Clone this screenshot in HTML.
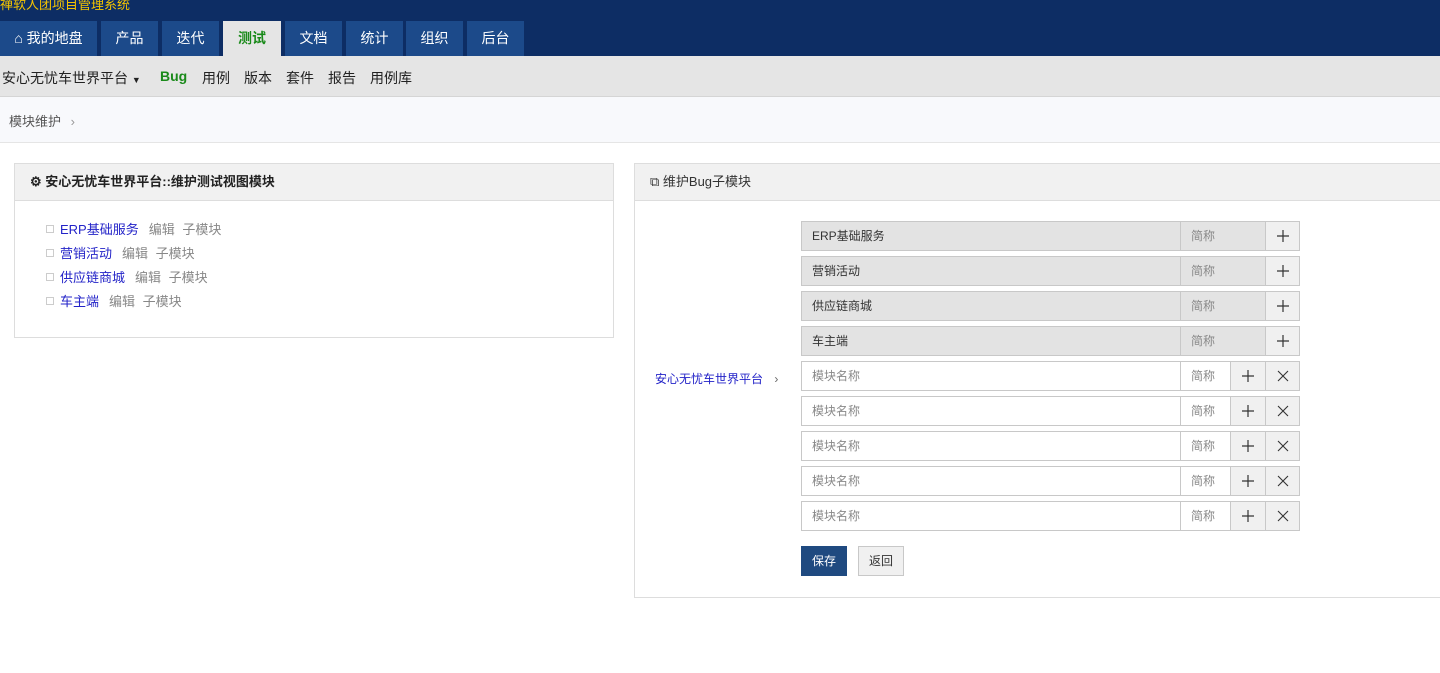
<!DOCTYPE html>
<html><head><meta charset="utf-8"><style>
*{box-sizing:border-box;margin:0;padding:0}
body{width:1440px;height:673px;overflow:hidden;background:#fff;font-family:"Liberation Sans","Noto Sans CJK SC",sans-serif;font-size:13px;color:#333;position:relative}
.abs{position:absolute}
.top{left:0;top:0;width:1440px;height:56px;background:#0d2d64}
.title{left:0;top:-6px;color:#f5c400;font-size:13px;white-space:nowrap}
.tab{top:21px;height:35px;background:#1c4a8a;color:#fff;font-size:14px;line-height:35px;text-align:center}
.tab.on{background:#e5e5e5;color:#1a8a1a;font-weight:bold}
.sub{left:0;top:56px;width:1440px;height:41px;background:#e5e5e5;border-bottom:1px solid #d5d5d5}
.sub span{position:absolute;top:12px;font-size:14px;color:#222}
.bc{left:0;top:97px;width:1440px;height:46px;background:#f8f9fc;border-bottom:1px solid #e5e5e5}
.panel{border:1px solid #ddd;background:#fff}
.ph{position:absolute;left:0;top:0;right:0;height:37px;background:#f1f1f1;border-bottom:1px solid #ddd;line-height:36px;padding-left:15px}
.li{position:absolute;left:31px;font-size:13px}
.li i{display:inline-block;width:8px;height:8px;border:1px solid #ccc;margin-right:6px;vertical-align:1px}
.li a{color:#2323c8;text-decoration:none}
.li b{font-weight:normal;color:#888;margin-left:10px}
.row{position:absolute;left:801px;height:30px}
.c{position:absolute;top:0;height:30px;border:1px solid #c8c8c8;line-height:28px;font-size:12px}
.g{background:#e3e3e3}
.btnc{background:#f0f0f0}
.btnc svg{position:absolute;left:50%;top:50%;margin:-7px 0 0 -7px}
</style></head><body>
<div class="abs top"></div>
<div class="abs title">禅软人团项目管理系统</div>
<div class="abs tab" style="left:0;width:97px">⌂ 我的地盘</div>
<div class="abs tab" style="left:101px;width:57px">产品</div>
<div class="abs tab" style="left:162px;width:57px">迭代</div>
<div class="abs tab on" style="left:223px;width:58px">测试</div>
<div class="abs tab" style="left:285px;width:57px">文档</div>
<div class="abs tab" style="left:346px;width:57px">统计</div>
<div class="abs tab" style="left:406px;width:57px">组织</div>
<div class="abs tab" style="left:467px;width:57px">后台</div>
<div class="abs sub">
<span style="left:2px">安心无忧车世界平台 <small style="font-size:9px">▼</small></span>
<span style="left:160px;color:#1a8a1a;font-weight:bold">Bug</span>
<span style="left:202px">用例</span><span style="left:244px">版本</span><span style="left:286px">套件</span><span style="left:328px">报告</span><span style="left:370px">用例库</span>
</div>
<div class="abs bc"><span style="position:absolute;left:9px;top:14px;color:#555;font-size:13px">模块维护 <span style="color:#999;margin-left:6px">›</span></span></div>

<div class="abs panel" style="left:14px;top:163px;width:600px;height:175px">
<div class="ph" style="font-weight:bold;color:#222">⚙ 安心无忧车世界平台::维护测试视图模块</div>
<div class="li" style="top:55px"><i></i><a>ERP基础服务</a><b>编辑</b> <b style="margin-left:4px">子模块</b></div>
<div class="li" style="top:79px"><i></i><a>营销活动</a><b>编辑</b> <b style="margin-left:4px">子模块</b></div>
<div class="li" style="top:103px"><i></i><a>供应链商城</a><b>编辑</b> <b style="margin-left:4px">子模块</b></div>
<div class="li" style="top:127px"><i></i><a>车主端</a><b>编辑</b> <b style="margin-left:4px">子模块</b></div>
</div>

<div class="abs panel" style="left:634px;top:163px;width:820px;height:435px">
<div class="ph" style="color:#333">⧉ 维护Bug子模块</div>
</div>
<div class="abs" style="left:655px;top:370px;font-size:12px;color:#2323c8">安心无忧车世界平台 <span style="color:#666;margin-left:8px">›</span></div>

<div class="row" style="top:221px"><div class="c g" style="left:0;width:380px;padding-left:10px">ERP基础服务</div><div class="c g" style="left:379px;width:86px;padding-left:10px;color:#888">简称</div><div class="c btnc" style="left:464px;width:35px"><svg width="14" height="14"><path d="M7 1V13M1 7H13" stroke="#333" stroke-width="1.2"/></svg></div></div>
<div class="row" style="top:256px"><div class="c g" style="left:0;width:380px;padding-left:10px">营销活动</div><div class="c g" style="left:379px;width:86px;padding-left:10px;color:#888">简称</div><div class="c btnc" style="left:464px;width:35px"><svg width="14" height="14"><path d="M7 1V13M1 7H13" stroke="#333" stroke-width="1.2"/></svg></div></div>
<div class="row" style="top:291px"><div class="c g" style="left:0;width:380px;padding-left:10px">供应链商城</div><div class="c g" style="left:379px;width:86px;padding-left:10px;color:#888">简称</div><div class="c btnc" style="left:464px;width:35px"><svg width="14" height="14"><path d="M7 1V13M1 7H13" stroke="#333" stroke-width="1.2"/></svg></div></div>
<div class="row" style="top:326px"><div class="c g" style="left:0;width:380px;padding-left:10px">车主端</div><div class="c g" style="left:379px;width:86px;padding-left:10px;color:#888">简称</div><div class="c btnc" style="left:464px;width:35px"><svg width="14" height="14"><path d="M7 1V13M1 7H13" stroke="#333" stroke-width="1.2"/></svg></div></div>

<div class="row" style="top:361px"><div class="c" style="left:0;width:380px;padding-left:10px;color:#888">模块名称</div><div class="c" style="left:379px;width:51px;padding-left:10px;color:#888">简称</div><div class="c btnc" style="left:429px;width:36px"><svg width="14" height="14"><path d="M7 1V13M1 7H13" stroke="#333" stroke-width="1.2"/></svg></div><div class="c btnc" style="left:464px;width:35px"><svg width="14" height="14"><path d="M2 2L12 12M12 2L2 12" stroke="#333" stroke-width="1.1"/></svg></div></div>
<div class="row" style="top:396px"><div class="c" style="left:0;width:380px;padding-left:10px;color:#888">模块名称</div><div class="c" style="left:379px;width:51px;padding-left:10px;color:#888">简称</div><div class="c btnc" style="left:429px;width:36px"><svg width="14" height="14"><path d="M7 1V13M1 7H13" stroke="#333" stroke-width="1.2"/></svg></div><div class="c btnc" style="left:464px;width:35px"><svg width="14" height="14"><path d="M2 2L12 12M12 2L2 12" stroke="#333" stroke-width="1.1"/></svg></div></div>
<div class="row" style="top:431px"><div class="c" style="left:0;width:380px;padding-left:10px;color:#888">模块名称</div><div class="c" style="left:379px;width:51px;padding-left:10px;color:#888">简称</div><div class="c btnc" style="left:429px;width:36px"><svg width="14" height="14"><path d="M7 1V13M1 7H13" stroke="#333" stroke-width="1.2"/></svg></div><div class="c btnc" style="left:464px;width:35px"><svg width="14" height="14"><path d="M2 2L12 12M12 2L2 12" stroke="#333" stroke-width="1.1"/></svg></div></div>
<div class="row" style="top:466px"><div class="c" style="left:0;width:380px;padding-left:10px;color:#888">模块名称</div><div class="c" style="left:379px;width:51px;padding-left:10px;color:#888">简称</div><div class="c btnc" style="left:429px;width:36px"><svg width="14" height="14"><path d="M7 1V13M1 7H13" stroke="#333" stroke-width="1.2"/></svg></div><div class="c btnc" style="left:464px;width:35px"><svg width="14" height="14"><path d="M2 2L12 12M12 2L2 12" stroke="#333" stroke-width="1.1"/></svg></div></div>
<div class="row" style="top:501px"><div class="c" style="left:0;width:380px;padding-left:10px;color:#888">模块名称</div><div class="c" style="left:379px;width:51px;padding-left:10px;color:#888">简称</div><div class="c btnc" style="left:429px;width:36px"><svg width="14" height="14"><path d="M7 1V13M1 7H13" stroke="#333" stroke-width="1.2"/></svg></div><div class="c btnc" style="left:464px;width:35px"><svg width="14" height="14"><path d="M2 2L12 12M12 2L2 12" stroke="#333" stroke-width="1.1"/></svg></div></div>

<div class="abs" style="left:801px;top:546px;width:46px;height:30px;background:#1f4a80;color:#fff;font-size:12px;line-height:30px;text-align:center">保存</div>
<div class="abs" style="left:858px;top:546px;width:46px;height:30px;background:#f0f0f0;border:1px solid #c8c8c8;color:#333;font-size:12px;line-height:28px;text-align:center">返回</div>
</body></html>
